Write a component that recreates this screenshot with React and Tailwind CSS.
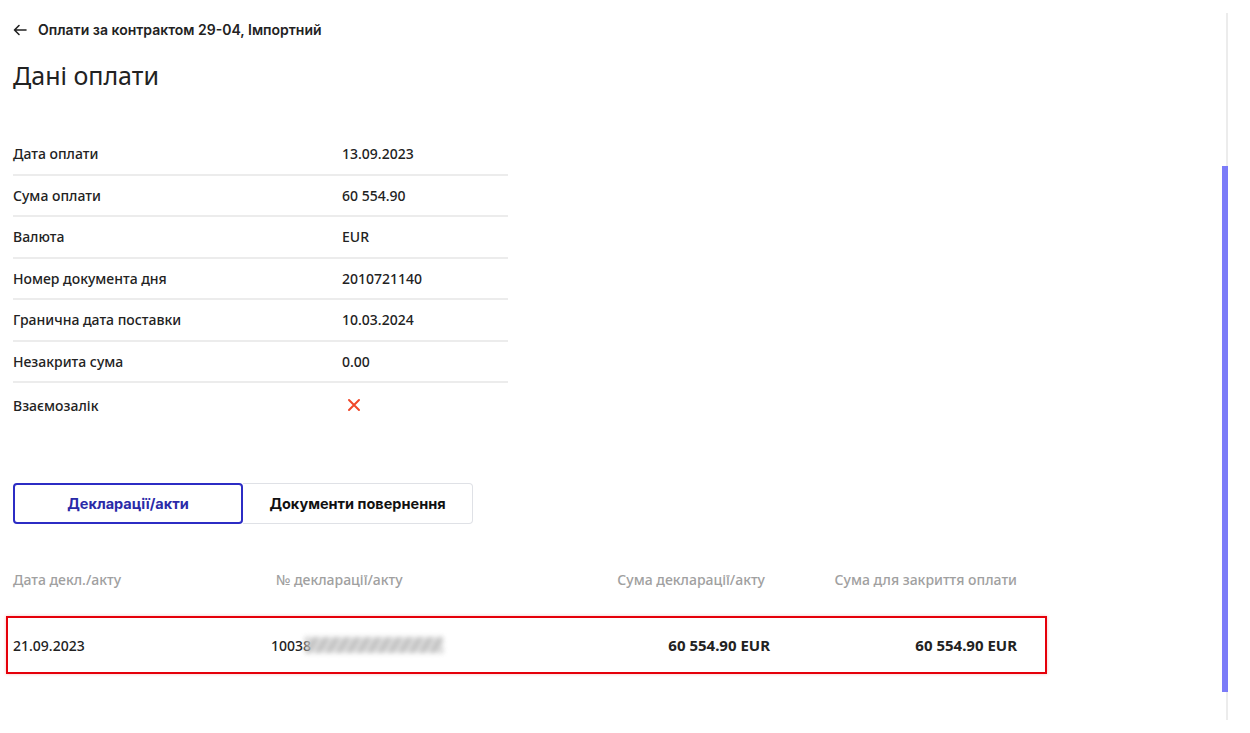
import React from 'react';

const details = [
    { label: 'Дата оплати', value: '13.09.2023' },
    { label: 'Сума оплати', value: '60 554.90' },
    { label: 'Валюта', value: 'EUR' },
    { label: 'Номер документа дня', value: '2010721140' },
    { label: 'Гранична дата поставки', value: '10.03.2024' },
    { label: 'Незакрита сума', value: '0.00' },
];

const ui = { fontFamily: '"Noto Sans", "Open Sans", sans-serif' };
const geo = { fontFamily: 'Inter, "Noto Sans", sans-serif' };

export default function App() {
    return (
        <div className="h-[733px] w-[1250px] bg-white flex overflow-hidden text-[#222]" style={ui}>
            {/* Content */}
            <div className="flex-1 pl-[13px]">
                {/* Back link */}
                <div className="flex items-center gap-[11px] pt-[20px] h-[39px] text-[14px] font-semibold" style={geo}>
                    <svg width="14" height="12" viewBox="0 0 14 12" fill="none" stroke="#222" strokeWidth="1.6" strokeLinecap="round" strokeLinejoin="round">
                        <path d="M13 6H1.5M6 1.5L1.5 6L6 10.5" />
                    </svg>
                    <span>Оплати за контрактом 29-04, Імпортний</span>
                </div>

                <h1 className="mt-[21px] text-[25px] leading-[30px] font-normal">Дані оплати</h1>

                {/* Details */}
                <div className="mt-[44px] w-[495px] text-[14px] font-medium">
                    {details.map((row) => (
                        <div key={row.label} className="flex items-center h-[41.5px] border-b-2 border-[#ececec]">
                            <div className="w-[329px]">{row.label}</div>
                            <div>{row.value}</div>
                        </div>
                    ))}
                    <div className="flex items-center h-[44px]">
                        <div className="w-[329px]">Взаємозалік</div>
                        <svg width="14" height="14" viewBox="0 0 14 14" className="ml-[5px]" stroke="#f0482a" strokeWidth="2" strokeLinecap="round">
                            <path d="M2 2L12 12M12 2L2 12" />
                        </svg>
                    </div>
                </div>

                {/* Tabs */}
                <div className="mt-[56px] flex text-[14.5px] font-bold" style={geo}>
                    <button className="w-[230px] h-[41px] rounded-[4px] border-2 border-[#2c2cc4] text-[#2a2aa8]">
                        Декларації/акти
                    </button>
                    <button className="w-[230px] h-[41px] rounded-r-[4px] border border-l-0 border-[#dfe1e6] text-[#111]">
                        Документи повернення
                    </button>
                </div>

                {/* Declarations table */}
                <div className="mt-[43px] w-[1034px] text-[14px] font-medium">
                    <div className="flex items-center h-[24px] text-[#a0a0a0]">
                        <div className="w-[263px]">Дата декл./акту</div>
                        <div className="w-[200px]">№ декларації/акту</div>
                        <div className="w-[289px] text-right">Сума декларації/акту</div>
                        <div className="w-[252px] text-right">Сума для закриття оплати</div>
                    </div>
                    <div className="mt-[25px] -ml-[7px] flex items-center h-[58px] pl-[5px] border-2 border-[#e5000a] shadow-[0_0_3px_rgba(230,0,10,0.25)]">
                        <div className="w-[258px]">21.09.2023</div>
                        <div className="w-[200px] flex items-center">
                            <span>10038</span>
                            <span className="ml-[-6px] h-[16px] w-[138px] blur-[2.5px] bg-[repeating-linear-gradient(120deg,#9a9a9a_0px,#bdbdbd_3px,#e6e6e6_6px,#a8a8a8_9px)] opacity-80" />
                        </div>
                        <div className="w-[299px] text-right font-bold text-[15px]">60 554.90 EUR</div>
                        <div className="w-[247px] text-right font-bold text-[15px]">60 554.90 EUR</div>
                    </div>
                </div>
            </div>

            {/* Scrollbar */}
            <div className="w-[28px] flex flex-col pt-[13px] pb-[13px] pr-[22px]">
                <div className="h-[153px] flex justify-end">
                    <div className="w-[2px] bg-[#ececec]" />
                </div>
                <div className="h-[526px] flex justify-end">
                    <div className="w-[6px] bg-[#7b7bf8]" />
                </div>
                <div className="h-[28px] flex justify-end">
                    <div className="w-[2px] bg-[#ececec]" />
                </div>
            </div>
        </div>
    );
}
